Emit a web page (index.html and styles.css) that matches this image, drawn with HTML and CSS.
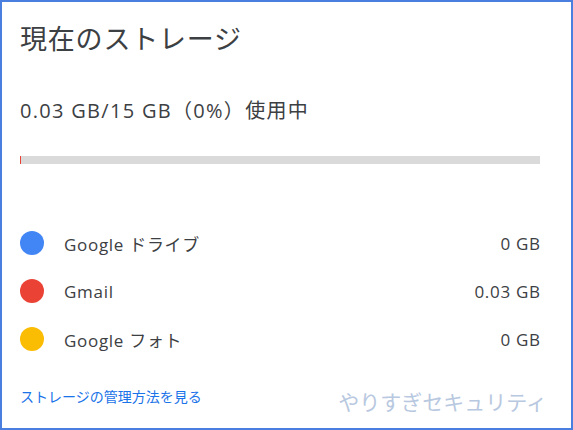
FILE: index.html
```html
<!DOCTYPE html>
<html lang="ja">
<head>
  <meta charset="UTF-8">
  <meta name="viewport" content="width=device-width, initial-scale=1.0">
  <title>現在のストレージ</title>
  <link rel="stylesheet" href="styles.css">
</head>
<body>
  <main class="storage-card">
    <h1 class="card-title">現在のストレージ</h1>
    <p class="usage">0.03 GB/15 GB（0%）使用中</p>
    <div class="usage-bar">
      <div class="usage-fill" style="width: 1px"></div>
    </div>
    <ul class="service-list">
      <li class="service-row">
        <span class="dot drive-dot"></span>
        <span class="service-name">Google ドライブ</span>
        <span class="service-size">0 GB</span>
      </li>
      <li class="service-row">
        <span class="dot gmail-dot"></span>
        <span class="service-name">Gmail</span>
        <span class="service-size">0.03 GB</span>
      </li>
      <li class="service-row">
        <span class="dot photo-dot"></span>
        <span class="service-name">Google フォト</span>
        <span class="service-size">0 GB</span>
      </li>
    </ul>
    <a class="help-link" href="#">ストレージの管理方法を見る</a>
    <span class="watermark">やりすぎセキュリティ</span>
  </main>
</body>
</html>
```

FILE: styles.css
```css
* {
  --frame-color: #4a7fe0;
  --text-color: #3c4043;
  --link-color: #1a73e8;
  --bar-color: #dadada;
  --watermark-color: #b8c8e0;
}
body {
    margin: 0;
    font-family: "Open Sans", "Noto Sans CJK JP", sans-serif;
    color: var(--text-color);
    background-color: #fff;
}

.storage-card {
    position: relative;
    box-sizing: border-box;
    width: 573px;
    height: 430px;
    padding: 21px 31px 0 18px;

    border: 2px solid var(--frame-color);
    background-color: #fff;
}

.card-title {
    margin: 0;
    font-size: 27px;
    font-weight: 400;
    line-height: 32px;
    letter-spacing: 0.8px;
}

.usage {
    margin: 44px 0 0;
    font-size: 20px;
    line-height: 24px;
    letter-spacing: 1.3px;
}

.usage-bar {
    display: flex;
    height: 8px;
    margin-top: 33px;
    background-color: var(--bar-color);
}
.usage-fill {
    background-color: #ea4335;
}

.service-list {
    margin: 55px 0 0;
    padding: 0;
    list-style: none;
}
.service-row {
    display: flex;
    align-items: center;
    height: 48px;
    font-size: 17px;
    letter-spacing: 0.7px;
}
.dot {
    width: 24px;
    height: 24px;
    margin-right: 20px;
    border-radius: 50%;
}
.drive-dot {
    background-color: #4285f4;
}
.gmail-dot {
    background-color: #ea4335;
}
.photo-dot {
    background-color: #fbbc04;
}
.service-name {
    flex: 1;
}
.service-size {
    margin-right: -0.7px;
}

.help-link {
    display: inline-block;
    margin-top: 24px;
    font-size: 14px;
    line-height: 20px;
    color: var(--link-color);
    text-decoration: none;
}

.watermark {
    position: absolute;
    right: 24px;
    bottom: 12px;
    font-size: 21px;
    color: var(--watermark-color);
}
```
